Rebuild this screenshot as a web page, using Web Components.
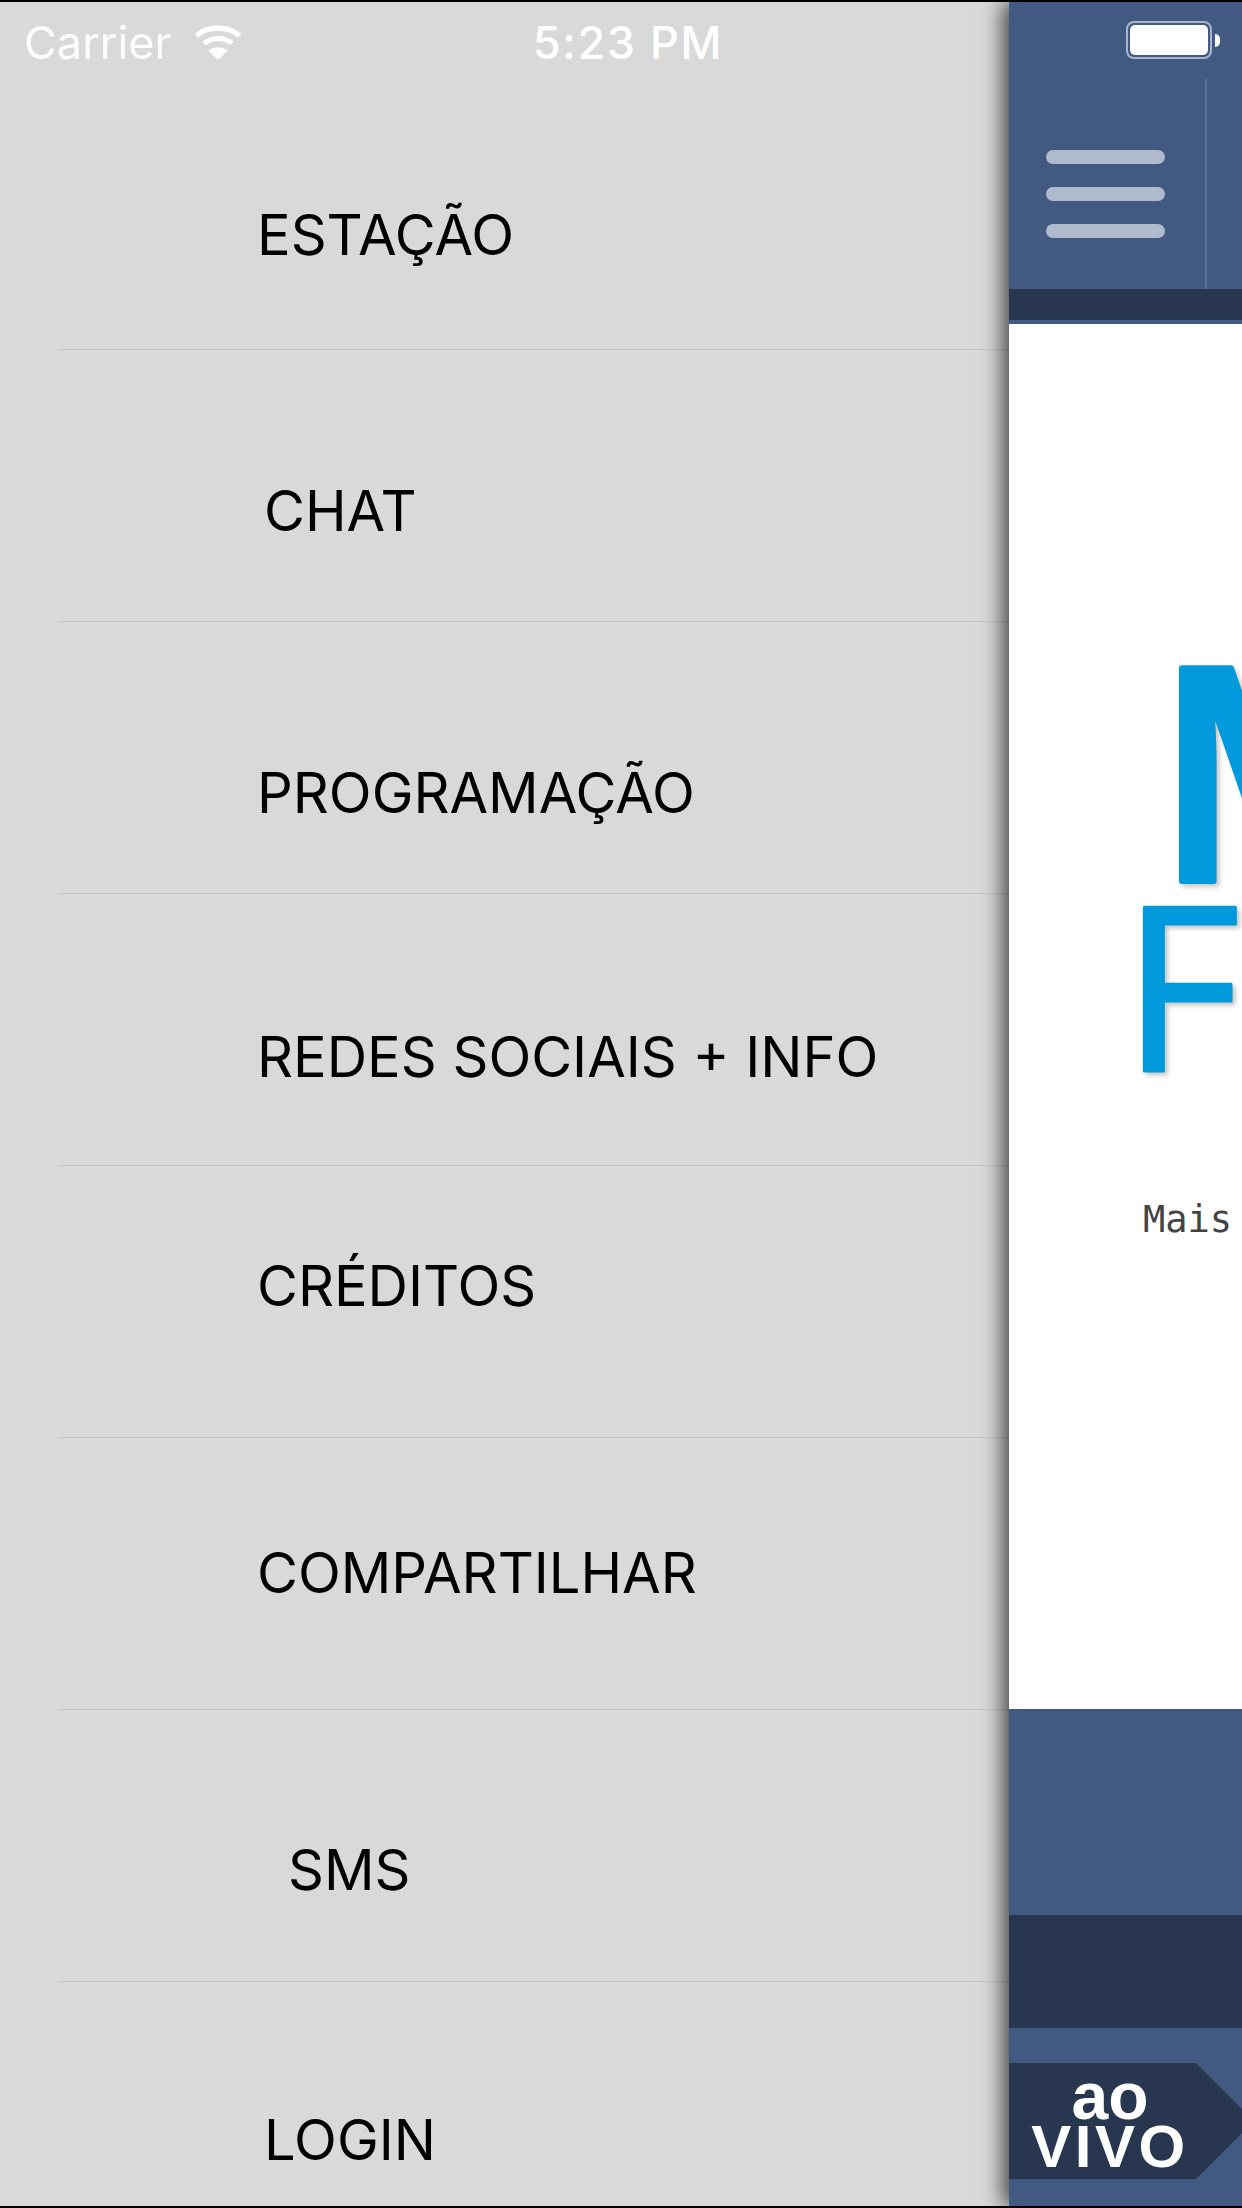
<!DOCTYPE html>
<html lang="pt">
<head>
<meta charset="utf-8">
<title>Menu</title>
<style>
    html, body { margin: 0; padding: 0; background: #000; }
</style>
</head>
<body>
<app-shell>
    <status-bar slot="status"></status-bar>
    <side-menu slot="menu">
        <menu-item left="257" top="59">ESTAÇÃO</menu-item>
        <menu-item left="264" top="25">CHAT</menu-item>
        <menu-item left="257" top="35">PROGRAMAÇÃO</menu-item>
        <menu-item left="257" top="27">REDES SOCIAIS + INFO</menu-item>
        <menu-item left="257" top="-16">CRÉDITOS</menu-item>
        <menu-item left="257" top="-1">COMPARTILHAR</menu-item>
        <menu-item left="288" top="24">SMS</menu-item>
        <menu-item left="264" top="46" last>LOGIN</menu-item>
    </side-menu>
    <main-panel slot="main"></main-panel>
</app-shell>

<script>
class AppShell extends HTMLElement {
    constructor() {
        super();
        const shadowRoot = this.attachShadow({mode: 'open'});
        shadowRoot.innerHTML = `
            <style>
                :host {
                    display: block;
                    position: relative;
                    width: 1242px;
                    height: 2208px;
                    box-sizing: border-box;
                    padding: 2px 0;
                    background: #000;
                    overflow: hidden;
                }
                #row {
                    display: flex;
                    height: 100%;
                }
            </style>
            <div id="row">
                <slot name="menu"></slot>
                <slot name="main"></slot>
            </div>
            <slot name="status"></slot>
        `;
    }
}

class StatusBar extends HTMLElement {
    constructor() {
        super();
        const shadowRoot = this.attachShadow({mode: 'open'});
        shadowRoot.innerHTML = `
            <style>
                :host {
                    position: absolute;
                    top: 2px;
                    left: 0;
                    width: 1242px;
                    height: 78px;
                    color: #fff;
                    font: 400 45px Inter, "Liberation Sans", sans-serif;
                }
                #bar {
                    display: grid;
                    grid-template-columns: 1fr auto 1fr;
                    align-items: center;
                    height: 80px;
                    padding: 0 22px 0 24px;
                    box-sizing: border-box;
                }
                .left { display: flex; align-items: center; gap: 22px; }
                .left span { opacity: .92; }
                .time { font-weight: 500; letter-spacing: 1.6px; margin-left: 12px; }
                .right { display: flex; justify-content: flex-end; align-items: center; margin-bottom: 4px; }
                .battery {
                    width: 86px;
                    height: 38px;
                    box-sizing: border-box;
                    border: 2px solid #a9b5c9;
                    border-radius: 8px;
                    padding: 2px;
                }
                .battery i {
                    display: block;
                    height: 100%;
                    background: #fff;
                    border-radius: 5px;
                }
                .cap {
                    width: 5px;
                    height: 13px;
                    margin-left: 3px;
                    background: #fff;
                    border-radius: 0 7px 7px 0;
                }
            </style>
            <div id="bar">
                <div class="left">
                    <span>Carrier</span>
                    <svg width="48" height="35" viewBox="0 0 46 34">
                        <path d="M2 10.5C13 0.5 33 0.5 44 10.5" fill="none" stroke="#fff" stroke-width="5"/>
                        <path d="M9.5 18C17 11.5 29 11.5 36.5 18" fill="none" stroke="#fff" stroke-width="5"/>
                        <path d="M23 34L13.5 25C19 20.5 27 20.5 32.5 25Z" fill="#fff"/>
                    </svg>
                </div>
                <div class="time">5:23 PM</div>
                <div class="right">
                    <div class="battery"><i></i></div>
                    <div class="cap"></div>
                </div>
            </div>
        `;
    }
}

class SideMenu extends HTMLElement {
    constructor() {
        super();
        const shadowRoot = this.attachShadow({mode: 'open'});
        shadowRoot.innerHTML = `
            <style>
                :host {
                    display: flex;
                    flex-direction: column;
                    flex: none;
                    width: 1009px;
                    height: 100%;
                    background: #d9d9d9;
                    color: #000;
                    font: 400 56px Inter, "Liberation Sans", sans-serif;
                }
            </style>
            <slot></slot>
        `;
    }
}

class MenuItem extends HTMLElement {
    connectedCallback() {
        // the rows are all the same height but the labels sit unevenly inside them
        this.style.setProperty('--left', `${this.getAttribute('left')}px`);
        this.style.setProperty('--top', `${this.getAttribute('top')}px`);
    }

    constructor() {
        super();
        const shadowRoot = this.attachShadow({mode: 'open'});
        shadowRoot.innerHTML = `
            <style>
                :host {
                    display: flex;
                    flex: none;
                    align-items: center;
                    height: 272px;
                    box-sizing: border-box;
                    margin-left: 58px;
                    padding-left: calc(var(--left) - 58px);
                    border-bottom: 1px solid #c6c6c6;
                }
                :host(:first-child) { height: 348px; }
                :host([last]) { height: 224px; border-bottom: 0; }
                span { position: relative; top: var(--top); white-space: nowrap; }
            </style>
            <span><slot></slot></span>
        `;
    }
}

class MainPanel extends HTMLElement {
    constructor() {
        super();
        const shadowRoot = this.attachShadow({mode: 'open'});
        shadowRoot.innerHTML = `
            <style>
                :host {
                    display: flex;
                    flex-direction: column;
                    flex: none;
                    position: relative;
                    width: 233px;
                    height: 100%;
                    background: #425a82;
                    box-shadow: -6px 0 20px rgba(0, 0, 0, .7);
                }
                #clip {
                    display: flex;
                    flex-direction: column;
                    height: 100%;
                    overflow: hidden;
                }
                header {
                    display: flex;
                    flex: none;
                    height: 287px;
                    box-sizing: border-box;
                    padding: 77px 0 0 37px;
                }
                .menu-icon {
                    display: flex;
                    flex-direction: column;
                    gap: 23px;
                    flex: none;
                    width: 119px;
                    padding-top: 71px;
                }
                .menu-icon i {
                    display: block;
                    height: 14px;
                    border-radius: 7px;
                    background: #b0bacd;
                    filter: blur(.7px);
                }
                .divider {
                    width: 2px;
                    margin-left: 40px;
                    background: #5a7097;
                }
                .band { flex: none; height: 31px; background: #29364f; }
                .gap { flex: none; height: 4px; }
                .content {
                    flex: none;
                    height: 1385px;
                    box-sizing: border-box;
                    padding-top: 330px;
                    background: #fff;
                    overflow: hidden;
                    white-space: nowrap;
                }
                .logo { display: block; width: 233px; height: 440px; }
                .logo text {
                    fill: #0099dc;
                    stroke: #0099dc;
                    stroke-linejoin: round;
                    font-family: "Open Sans", sans-serif;
                    filter: drop-shadow(3px 3px 2px rgba(0, 0, 0, .22));
                }
                .tagline {
                    font: 400 37px "DejaVu Sans Mono", monospace;
                    color: #444;
                    margin: 104px 0 0 134px;
                }
                .footer { flex: none; height: 206px; }
                .dark { flex: none; height: 113px; background: #29364f; }
                .live {
                    flex: none;
                    height: 178px;
                    box-sizing: border-box;
                    padding-top: 35px;
                }
            </style>
            <div id="clip">
                <header>
                    <div class="menu-icon"><i></i><i></i><i></i></div>
                    <div class="divider"></div>
                </header>
                <div class="band"></div>
                <div class="gap"></div>
                <div class="content">
                    <svg class="logo" viewBox="0 0 233 440">
                        <text x="145" y="227" font-size="298" font-weight="600" stroke-width="6">M</text>
                        <text x="113" y="417" font-size="229" font-weight="400" stroke-width="3">F</text>
                    </svg>
                    <div class="tagline">Mais</div>
                </div>
                <div class="footer"></div>
                <div class="dark"></div>
                <div class="live"><live-tag></live-tag></div>
            </div>
        `;
    }
}

class LiveTag extends HTMLElement {
    constructor() {
        super();
        const shadowRoot = this.attachShadow({mode: 'open'});
        shadowRoot.innerHTML = `
            <style>
                :host {
                    display: flex;
                    flex-direction: column;
                    align-items: center;
                    width: 245px;
                    height: 116px;
                    box-sizing: border-box;
                    padding: 0 43px 0 0;
                    background: #29364f;
                    clip-path: polygon(0 0, 187px 0, 245px 58px, 187px 116px, 0 116px);
                    color: #fff;
                    font-family: "Liberation Sans", Arial, sans-serif;
                    font-weight: 700;
                }
                .ao { font-size: 66px; line-height: 50px; margin-top: 8px; }
                .vivo { font-size: 60px; line-height: 50px; letter-spacing: 3.5px; margin-top: 1px; }
            </style>
            <div class="ao">ao</div>
            <div class="vivo">VIVO</div>
        `;
    }
}

customElements.define('app-shell', AppShell);
customElements.define('status-bar', StatusBar);
customElements.define('side-menu', SideMenu);
customElements.define('menu-item', MenuItem);
customElements.define('main-panel', MainPanel);
customElements.define('live-tag', LiveTag);
</script>
</body>
</html>
